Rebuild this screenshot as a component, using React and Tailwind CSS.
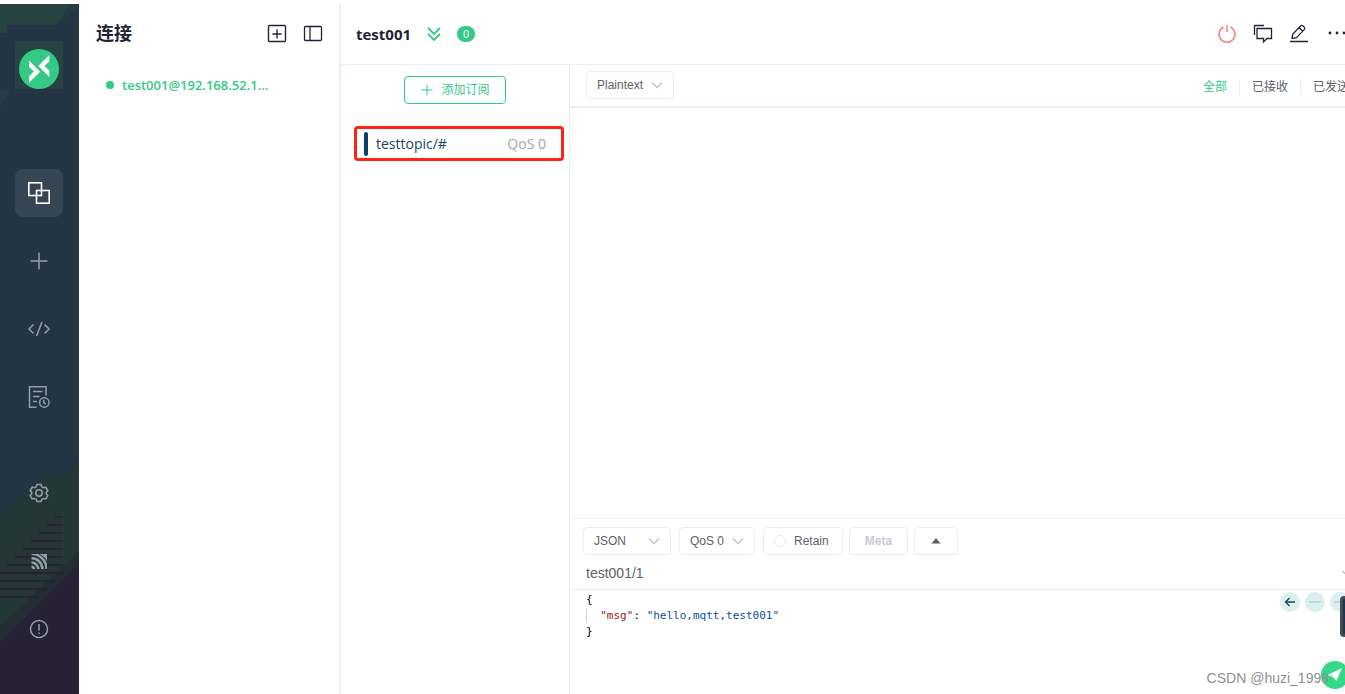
import { useState } from 'react'

const navIcons = {
  connections: (
    <g stroke="#fff" strokeWidth="1.6">
      <rect x="1.8" y="1.8" width="12.7" height="12.7" />
      <rect x="9.5" y="9.5" width="12.7" height="12.7" />
    </g>
  ),
  add: <path d="M12 3.5v17M3.5 12h17" />,
  script: <path d="M6.5 7.5 2 12l4.500 4.500M17.500 7.500 22 12l-4.500 4.500M15 5 9.500 19" />,
  log: (
    <>
      <path d="M19 10.500V1.800H2.500v20.400h7" />
      <path d="M6 6.500h9.500M6 11.500h6.500M6 16.500h4" />
      <circle cx="17.300" cy="17.500" r="4.700" />
      <path d="M16.800 14.800v3l2 1.400" />
    </>
  ),
  settings: (
    <>
      <path d="M10 3.500h4l.8 2.300 1.600.9 2.400-.5 2 3.400-1.600 1.800v1.400l1.600 1.800-2 3.400-2.400-.5-1.600.9-.8 2.100h-4l-.8-2.100-1.600-.9-2.400.5-2-3.400 1.600-1.800v-1.400L3.200 9.600l2-3.400 2.400.5 1.600-.9z" />
      <circle cx="12" cy="12" r="3.200" />
    </>
  ),
  feed: (
    <>
      <clipPath id="feed-square"><path d="M4.500 5h15.500v15H4.500z" /></clipPath>
      <g clipPath="url(#feed-square)" strokeWidth="2.600">
        <path d="M4 17.500a3 3 0 0 1 3 3M4 13.200a7.300 7.300 0 0 1 7.300 7.300M4 9a11.500 11.500 0 0 1 11.500 11.500M4 4.800a15.700 15.700 0 0 1 15.700 15.700" />
        <path d="M11 4.500c4.500 1.500 8 4.500 9.500 9V4.500z" fill="#91a0aa" stroke="none" />
      </g>
    </>
  ),
  help: (
    <>
      <circle cx="12" cy="12" r="8.500" />
      <path d="M12 7v6.500M12 15.500v1.500" />
    </>
  ),
}

const topNav = [
  { key: 'connections', label: '连接' },
  { key: 'add', label: '新建连接' },
  { key: 'script', label: '脚本' },
  { key: 'log', label: '日志' },
]

const bottomNav = [
  { key: 'settings', label: '设置' },
  { key: 'feed', label: '订阅源' },
  { key: 'help', label: '关于' },
]

const stripes = [
  [55, 57, 63], [47, 65, 63], [39, 73, 63], [31, 81, 63], [23, 89, 63], [15, 97, 63],
  [7, 105, 63], [0, 113, 63], [0, 121, 55], [0, 129, 47], [0, 137, 39],
]

function NavButton({ item, active, onClick }) {
  return (
    <button
      type="button"
      aria-label={item.label}
      onClick={onClick}
      className={`flex size-12 items-center justify-center rounded-lg ${active ? 'bg-[#354554]' : ''}`}
    >
      <svg viewBox="0 0 24 24" className="size-6" fill="none" stroke="#91a0aa" strokeWidth="1.5">
        {navIcons[item.key]}
      </svg>
    </button>
  )
}

function Sidebar() {
  const [active, setActive] = useState('connections')

  return (
    <nav className="relative flex w-[79px] shrink-0 flex-col items-center bg-[#243444] pt-[45px] pr-px pb-[41px]">
      {/* Tinted corners */}
      <svg className="absolute top-0 left-0" width="79" height="110">
        <path d="M56 21 79 4V0H60z" fill="#253b43" />
        <path d="M0 0h70L56 21H7v8H0zM15 37h48v48H15z" fill="#264341" />
        <path d="M0 86h10L0 104z" fill="#243c42" />
      </svg>
      <svg className="absolute bottom-0 left-0" width="79" height="234">
        <path d="M0 54 15 40 39 24V13h24L79 0v105L0 180z" fill="#243635" />
        <path d="M79 103 0 182v52h79z" fill="#262233" />
        <path d="M79 92 0 166v16l79-79z" fill="#252d34" />
        {stripes.map(([x, y, end]) => (
          <path key={y} d={`M${x} ${y}H${end}`} stroke="#262233" strokeWidth="2" />
        ))}
      </svg>

      <a href="#" aria-label="首页" className="relative mb-20 block size-10">
        <svg viewBox="0 0 40 40" className="size-10">
          <circle cx="20" cy="20" r="20" fill="#34c987" />
          <path d="M10 11.500 21.200 22.700 10 33.700V27.500l4.800-5-4.800-4.800zM30.300 6v6.200L25.500 17l4.800 4.800V28L19.300 17z" fill="#fff" />
        </svg>
      </a>
      <div className="relative flex flex-col gap-5">
        {topNav.map(item => (
          <NavButton key={item.key} item={item} active={active === item.key} onClick={() => setActive(item.key)} />
        ))}
      </div>
      <div className="relative mt-auto flex flex-col gap-5">
        {bottomNav.map(item => (
          <NavButton key={item.key} item={item} active={active === item.key} onClick={() => setActive(item.key)} />
        ))}
      </div>
    </nav>
  )
}

function ConnectionList() {
  return (
    <aside className="w-[262px] shrink-0 border-r-2 border-[#ededf8] pr-4 pl-[17px]">
      <header className="flex h-[60px] items-center gap-4">
        <h1 className="mr-auto text-lg font-bold text-[#262238]">连接</h1>
        <button type="button" aria-label="新建">
          <svg width="20" height="20" fill="none" stroke="#262238" strokeWidth="1.4">
            <rect x="1.500" y="1.500" width="17" height="16" rx="1" />
            <path d="M10 5.500v9M5.500 10h9" />
          </svg>
        </button>
        <button type="button" aria-label="折叠">
          <svg width="20" height="20" fill="none" stroke="#262238" strokeWidth="1.300">
            <rect x="1.500" y="2.500" width="17" height="14" rx="1" />
            <path d="M7 2.500v14" />
          </svg>
        </button>
      </header>
      <a href="#" className="mt-[11px] flex items-center gap-2 px-[10px] font-['Open_Sans',sans-serif] text-[13px] leading-5 font-semibold text-[#34c987]">
        <span className="size-2 rounded-full bg-[#34c987]" />
        test001@192.168.52.1...
      </a>
    </aside>
  )
}

function Chevron({ className }) {
  return (
    <svg width="12" height="8" fill="none" stroke="#c0c4cc" strokeWidth="1.500" className={className}>
      <path d="m1 1.500 5 5 5-5" />
    </svg>
  )
}

function Select({ label, options, className }) {
  return (
    <div className={`relative ${className}`}>
      <select
        aria-label={label}
        className="h-7 w-full appearance-none rounded border border-[#ebebfa] bg-white px-[10px] text-xs text-[#606266]"
      >
        {options.map(option => <option key={option}>{option}</option>)}
      </select>
      <Chevron className="pointer-events-none absolute top-[10px] right-[11px]" />
    </div>
  )
}

function Subscriptions() {
  return (
    <section className="w-[229px] shrink-0 border-r border-[#ebebfa]">
      <div className="flex justify-center pt-[11px]">
        <button type="button" className="flex h-7 items-center gap-[7px] rounded border border-[#34c987] px-[15px] text-xs text-[#34c987]">
          <svg width="14" height="14" stroke="currentColor"><path d="M7 1.500v11M1.500 7h11" /></svg>
          添加订阅
        </button>
      </div>
      <a
        href="#"
        className="mt-[22px] mr-[5px] ml-[13px] flex h-[35px] items-center rounded-sm border-3 border-[#ff2217] pr-[15px] pl-[7px] font-['Open_Sans',sans-serif] text-sm"
      >
        <span className="h-6 w-1 rounded-xs bg-[#07426a]" />
        <span className="ml-2 text-[#1b4462]">testtopic/#</span>
        <span className="ml-auto text-[#a0a6b0]">QoS 0</span>
      </a>
    </section>
  )
}

function RoundButton({ label, faded, d }) {
  return (
    <button type="button" aria-label={label} className="flex size-5 items-center justify-center rounded-full bg-[#dceeed]">
      <svg width="12" height="12" fill="none" stroke={faded ? '#b4c8cb' : '#1f4656'} strokeWidth="1.300"><path d={d} /></svg>
    </button>
  )
}

function Composer() {
  return (
    <section className="relative h-[176px] shrink-0 border-t border-[#e2f3f5]">
      <div className="flex items-center gap-2 pt-2 pl-[13px]">
        <Select label="格式" options={['JSON', 'Plaintext', 'Hex']} className="w-[88px]" />
        <Select label="QoS" options={['QoS 0', 'QoS 1', 'QoS 2']} className="w-[76px]" />
        <div className="flex gap-[6px]">
          <label className="flex h-7 w-20 items-center gap-2 rounded border border-[#ebebfa] px-[10px] text-xs text-[#606266]">
            <input type="checkbox" className="size-3 shrink-0 appearance-none rounded-full border border-[#dceeed] checked:bg-[#34c987]" />
            Retain
          </label>
          <button type="button" disabled className="h-7 w-[59px] rounded border border-[#ebebfa] text-xs font-bold text-[#c9cad6]">
            Meta
          </button>
          <button type="button" aria-label="展开" className="flex h-7 w-11 items-center justify-center rounded border border-[#ebebfa]">
            <svg width="10" height="6"><path d="M5 0 9.500 5.500h-9z" fill="#606266" /></svg>
          </button>
        </div>
      </div>
      <div className="mt-[2px] flex h-[33px] items-center border-b border-[#ebebfa] pr-[10px] pl-4">
        <input aria-label="主题" defaultValue="test001/1" className="min-w-0 flex-1 text-sm text-[#606266] outline-none" />
        <Chevron />
      </div>
      <div className="flex items-start justify-between pt-[2px] pr-[13px] pl-4">
        <pre className="text-[11px] leading-4 text-black">
          <code className="font-['DejaVu_Sans_Mono',monospace]">
            {'{\n'}
            <span className="border-l border-[#d5d5d5]">{'  '}</span>
            <span className="text-[#a31515]">"msg"</span>{': '}
            <span className="text-[#0451a5]">"hello,mqtt,test001"</span>
            {'\n}'}
          </code>
        </pre>
        <div className="flex gap-[5px]">
          <RoundButton label="上一条" d="M11 6H1.500M5.500 2 1.500 6l4 4" />
          <RoundButton label="清空" faded d="M0 6h12" />
          <RoundButton label="下一条" faded d="M0 6h12" />
        </div>
      </div>
      <button type="button" aria-label="发送" className="absolute right-[14px] bottom-[5px] flex size-7 items-center justify-center rounded-full bg-[#34d987]">
        <svg width="16" height="16"><path d="M15 1 .5 8l5 1.800L9.500 14z" fill="#fff" /></svg>
      </button>
      <span className="absolute top-[77px] right-[13px] h-[41px] w-[10px] rounded border-3 border-[#4a4a4a] bg-[#123a55]" />
      <span className="pointer-events-none absolute right-[34px] bottom-[6px] text-sm text-[#909090]">CSDN @huzi_1998</span>
    </section>
  )
}

export default function App() {
  const [filter, setFilter] = useState('全部')

  return (
    <div className="h-screen overflow-hidden bg-white pt-1 font-['Liberation_Sans','Noto_Sans_CJK_SC',sans-serif]">
      {/* The window runs on a little past the right edge */}
      <div className="flex h-full w-[calc(100%+18px)]">
        <Sidebar />
        <ConnectionList />
        <main className="flex min-w-0 flex-1 flex-col">
          <header className="flex h-[61px] shrink-0 items-center border-b border-[#ebebfa] pr-[18px] pl-[15px]">
            <h2 className="font-['Open_Sans',sans-serif] text-[15px] font-bold text-[#262238]">test001</h2>
            <button type="button" aria-label="展开" className="ml-4">
              <svg width="14" height="16" fill="none" stroke="#34c987" strokeWidth="1.800"><path d="m1 2 6 6 6-6M1 8l6 6 6-6" /></svg>
            </button>
            <span className="ml-4 flex h-4 w-[18px] items-center justify-center rounded-full bg-[#34c987] text-[11px] text-white">0</span>
            <div className="ml-auto flex gap-4 text-[#262238]">
              <button type="button" aria-label="断开">
                <svg width="20" height="20" fill="none" stroke="#f77b7d" strokeWidth="1.400"><path d="M6.500 3a8 8 0 1 0 7 0M10 1v7" /></svg>
              </button>
              <button type="button" aria-label="新窗口">
                <svg width="20" height="20" fill="none" stroke="currentColor" strokeWidth="1.300"><path d="M1.500 11V1.500H11M4 4.500h14.500v10H14l-3.500 3.500v-3.500H4z" /></svg>
              </button>
              <button type="button" aria-label="编辑">
                <svg width="20" height="20" fill="none" stroke="currentColor" strokeWidth="1.300"><path d="m3 14.500.8-4.500 8-8.200a1.500 1.500 0 0 1 2 0l1.600 1.600a1.500 1.500 0 0 1 0 2L7.500 13.600zM10 3.500 13.700 7.200M1 17.500h18" /></svg>
              </button>
              <button type="button" aria-label="更多">
                <svg width="20" height="20" fill="currentColor" overflow="visible"><circle cx="5" cy="9" r="1.400" /><circle cx="12" cy="9" r="1.400" /><circle cx="19" cy="9" r="1.400" /></svg>
              </button>
            </div>
          </header>
          <div className="flex min-h-0 flex-1">
            <Subscriptions />
            <div className="flex min-w-0 flex-1 flex-col">
              <div className="flex h-[43px] shrink-0 justify-between border-b-2 border-[#ebebfa] pt-[6px] pr-[2px] pl-4">
                <Select label="格式" options={['Plaintext', 'JSON', 'Hex']} className="w-[88px]" />
                <div className="mt-2 flex h-4 divide-x divide-[#ebebfa] text-xs">
                  {['全部', '已接收', '已发送'].map(name => (
                    <button
                      key={name}
                      type="button"
                      onClick={() => setFilter(name)}
                      className={`px-3 ${filter === name ? 'text-[#34c987]' : 'text-[#606266]'}`}
                    >
                      {name}
                    </button>
                  ))}
                </div>
              </div>
              <div className="flex-1" />
              <Composer />
            </div>
          </div>
        </main>
      </div>
    </div>
  )
}
